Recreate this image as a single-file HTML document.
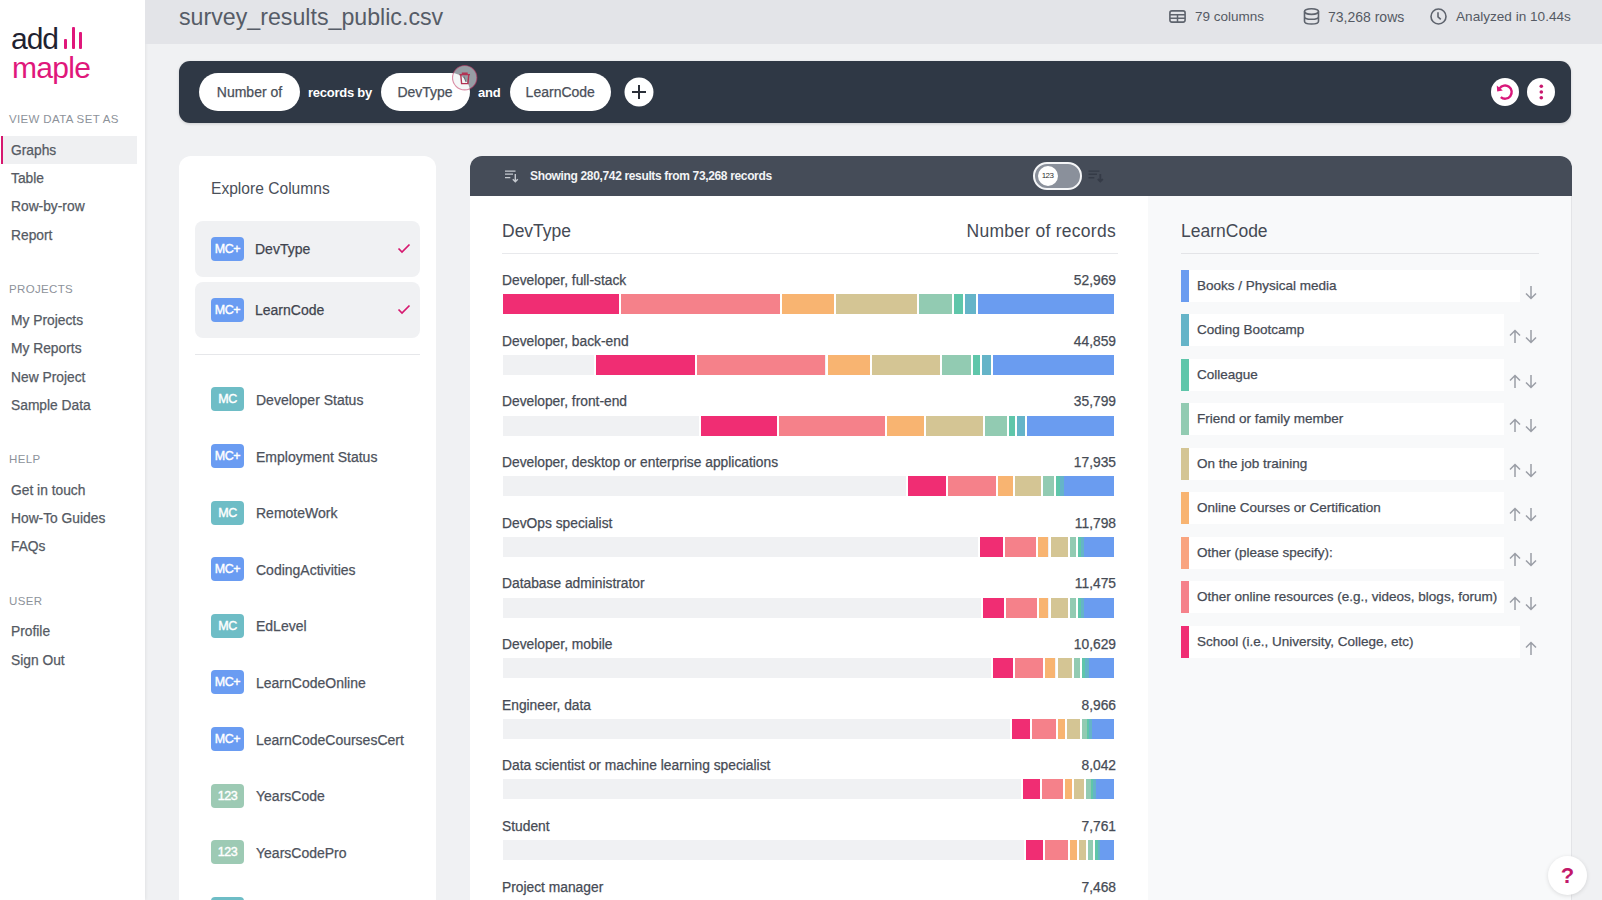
<!DOCTYPE html>
<html><head><meta charset="utf-8">
<style>
*{margin:0;padding:0;box-sizing:border-box}
html,body{width:1602px;height:900px;overflow:hidden;background:#F0F1F3;font-family:"Liberation Sans",sans-serif;color:#4A4F59;position:relative}
.rl,.rv,.lt,.cn,.si,.pill{-webkit-text-stroke:0.25px currentColor}
.abs{position:absolute}
div{white-space:nowrap}
#side{position:absolute;left:0;top:0;width:145px;height:900px;background:#FFFFFF;box-shadow:1px 0 3px rgba(0,0,0,0.06)}
.sh{position:absolute;left:9px;font-size:11.5px;line-height:1;color:#8D929A;letter-spacing:0.35px}
.si{position:absolute;left:11px;font-size:13.8px;line-height:1;color:#555A63}
#hdr{position:absolute;left:145px;top:0;width:1457px;height:44px;background:#E3E4E8}
.t{position:absolute;line-height:1}
.pill{position:absolute;top:73px;height:38px;background:#FFFFFF;border-radius:19px;font-size:14px;line-height:38px;color:#4A4F59;text-align:center}
.qt{position:absolute;top:86px;font-size:13px;line-height:1;color:#FFFFFF;font-weight:bold;letter-spacing:-0.25px}
.badge{position:absolute;left:211px;width:33px;height:24px;border-radius:4px;color:#fff;font-weight:normal;font-size:12.5px;line-height:24px;text-align:center;letter-spacing:-0.4px;-webkit-text-stroke:0.4px #fff}
.cn{position:absolute;left:256px;font-size:14px;line-height:1;color:#4D525C}
.rl{position:absolute;left:502px;font-size:13.8px;line-height:1;color:#464B55}
.rv{position:absolute;right:486px;font-size:13.8px;line-height:1;color:#464B55}
.trk{position:absolute;left:503px;width:611px;height:20px;background:#F0F1F3}
.seg{position:absolute;height:20px;box-sizing:border-box}
.lg{position:absolute;left:1181px;width:8px;height:32px}
.lb{position:absolute;left:1189px;height:32px;background:#FFFFFF}
.lt{position:absolute;left:1197px;font-size:13.5px;line-height:1;color:#464B55}
.ic{position:absolute;line-height:0}
</style></head><body>
<div id="side">
  <div class="abs" style="left:11px;top:23.5px;font-size:30px;color:#1F2230;letter-spacing:-1px;line-height:1">add</div>
  <div class="abs" style="left:64px;top:39px;width:3px;height:10px;background:#E0177B;border-radius:1px"></div>
  <div class="abs" style="left:71.5px;top:27px;width:3px;height:22px;background:#E0177B;border-radius:1px"></div>
  <div class="abs" style="left:78.5px;top:32px;width:3px;height:17px;background:#E0177B;border-radius:1px"></div>
  <div class="abs" style="left:12px;top:53px;font-size:30px;color:#E0177B;letter-spacing:-0.7px;line-height:1">maple</div>
  <div class="abs" style="left:3px;top:135.5px;width:134px;height:28px;background:#EFF0F2"></div>
  <div class="abs" style="left:1px;top:135.5px;width:2px;height:28px;background:#D6186F"></div>
<div class="sh" style="top:114.2px">VIEW DATA SET AS</div>
<div class="si" style="top:143.5px">Graphs</div>
<div class="si" style="top:172.0px">Table</div>
<div class="si" style="top:200.3px">Row-by-row</div>
<div class="si" style="top:228.5px">Report</div>
<div class="sh" style="top:284.2px">PROJECTS</div>
<div class="si" style="top:313.5px">My Projects</div>
<div class="si" style="top:342.0px">My Reports</div>
<div class="si" style="top:370.5px">New Project</div>
<div class="si" style="top:398.5px">Sample Data</div>
<div class="sh" style="top:454.2px">HELP</div>
<div class="si" style="top:483.5px">Get in touch</div>
<div class="si" style="top:511.5px">How-To Guides</div>
<div class="si" style="top:540.0px">FAQs</div>
<div class="sh" style="top:596.2px">USER</div>
<div class="si" style="top:625.0px">Profile</div>
<div class="si" style="top:653.5px">Sign Out</div>
</div>

<div id="hdr">
  <div class="t" style="left:34px;top:6px;font-size:23.2px;color:#565C67">survey_results_public.csv</div>
</div>
<!-- header stats -->
<div class="ic" style="left:1169px;top:10px"><svg width="17" height="13" viewBox="0 0 17 13"><rect x="0.9" y="0.9" width="15.2" height="11.2" rx="2" fill="none" stroke="#5E636D" stroke-width="1.6"/><path d="M1 4.7H16M1 8.3H16M8.5 4.7V12" stroke="#5E636D" stroke-width="1.5"/></svg></div>
<div class="t" style="left:1195px;top:9.5px;font-size:13.5px;color:#555A64">79 columns</div>
<div class="ic" style="left:1303px;top:8px"><svg width="17" height="17" viewBox="0 0 17 17"><ellipse cx="8.5" cy="3.6" rx="7" ry="2.8" fill="none" stroke="#5E636D" stroke-width="1.6"/><path d="M1.5 3.6V13.2C1.5 14.8 4.6 16 8.5 16S15.5 14.8 15.5 13.2V3.6M1.5 8.4C1.5 10 4.6 11.2 8.5 11.2S15.5 10 15.5 8.4" fill="none" stroke="#5E636D" stroke-width="1.6"/></svg></div>
<div class="t" style="left:1328px;top:9.5px;font-size:14px;color:#555A64">73,268 rows</div>
<div class="ic" style="left:1430px;top:8px"><svg width="17" height="17" viewBox="0 0 17 17"><circle cx="8.5" cy="8.5" r="7.5" fill="none" stroke="#5E636D" stroke-width="1.6"/><path d="M8 4.2V8.8L10.8 11.3" fill="none" stroke="#5E636D" stroke-width="1.6"/></svg></div>
<div class="t" style="left:1456px;top:9.5px;font-size:13.6px;color:#555A64">Analyzed in 10.44s</div>

<!-- QUERY BAR -->
<div class="abs" style="left:179px;top:61px;width:1392px;height:62px;background:#2F3845;border-radius:11px;box-shadow:0 1px 3px rgba(0,0,0,0.15)"></div>
<div class="pill" style="left:199px;width:101px">Number of</div>
<div class="qt" style="left:308px">records by</div>
<div class="pill" style="left:380.5px;width:89px">DevType</div>
<div class="ic" style="left:452px;top:65px"><svg width="26" height="26" viewBox="0 0 26 26"><circle cx="12.7" cy="12.7" r="12.2" fill="rgba(235,240,242,0.55)" stroke="rgba(190,50,95,0.55)" stroke-width="1.2"/><path d="M7.5 9.6H18M10.5 9.6V8.3H15V9.6M8.8 10.2L9.6 18.6H15.9L16.7 10.2" fill="none" stroke="#B23353" stroke-width="1.4"/><path d="M11.8 11.5L14.2 17" stroke="#6A6F78" stroke-width="1.1"/></svg></div>
<div class="qt" style="left:478px">and</div>
<div class="pill" style="left:509.5px;width:101.5px">LearnCode</div>
<div class="ic" style="left:623.5px;top:77px"><svg width="30" height="30" viewBox="0 0 30 30"><circle cx="15" cy="15" r="14.5" fill="#FFFFFF"/><path d="M15 8V22M8 15H22" stroke="#2A2F38" stroke-width="2"/></svg></div>
<div class="ic" style="left:1491px;top:78px"><svg width="28" height="28" viewBox="0 0 28 28"><circle cx="14" cy="14" r="14" fill="#FFFFFF"/><path d="M8.6 10.4A6.6 6.6 0 1 1 9.8 19.1" fill="none" stroke="#D9177A" stroke-width="2.4"/><path d="M5.8 7.6L6.2 13.6L11.8 12.4Z" fill="#D9177A"/></svg></div>
<div class="ic" style="left:1527px;top:78px"><svg width="28" height="28" viewBox="0 0 28 28"><circle cx="14" cy="14" r="14" fill="#FFFFFF"/><circle cx="14.3" cy="8.3" r="1.8" fill="#C8176E"/><circle cx="14.3" cy="14" r="1.8" fill="#C8176E"/><circle cx="14.3" cy="19.8" r="1.8" fill="#C8176E"/></svg></div>

<!-- EXPLORE CARD -->
<div class="abs" style="left:179px;top:156px;width:257px;height:760px;background:#FFFFFF;border-radius:12px"></div>
<div class="t" style="left:211px;top:180.5px;font-size:15.6px;color:#4A4F59">Explore Columns</div>
<div class="abs" style="left:195px;top:220.5px;width:225px;height:56.5px;background:#F0F1F3;border-radius:8px"></div>
<div class="abs" style="left:195px;top:281.5px;width:225px;height:56px;background:#F0F1F3;border-radius:8px"></div>
<div class="badge" style="top:236.8px;background:#6A9CF2">MC+</div>
<div class="cn" style="left:255px;top:242px;color:#3F444E">DevType</div>
<div class="badge" style="top:297.5px;background:#6A9CF2">MC+</div>
<div class="cn" style="left:255px;top:302.5px;color:#3F444E">LearnCode</div>
<div class="ic" style="left:397px;top:243px"><svg width="14" height="11" viewBox="0 0 14 11"><path d="M1.5 5.5L5 9L12.5 1.5" fill="none" stroke="#D6186F" stroke-width="1.7"/></svg></div>
<div class="ic" style="left:397px;top:304px"><svg width="14" height="11" viewBox="0 0 14 11"><path d="M1.5 5.5L5 9L12.5 1.5" fill="none" stroke="#D6186F" stroke-width="1.7"/></svg></div>
<div class="abs" style="left:195px;top:354px;width:225px;height:1px;background:#E6E7EA"></div>
<div class="badge" style="top:387.4px;background:#6EBDC6">MC</div>
<div class="cn" style="top:392.9px">Developer Status</div>
<div class="badge" style="top:444.0px;background:#6A9CF2">MC+</div>
<div class="cn" style="top:449.5px">Employment Status</div>
<div class="badge" style="top:500.6px;background:#6EBDC6">MC</div>
<div class="cn" style="top:506.1px">RemoteWork</div>
<div class="badge" style="top:557.2px;background:#6A9CF2">MC+</div>
<div class="cn" style="top:562.7px">CodingActivities</div>
<div class="badge" style="top:613.8px;background:#6EBDC6">MC</div>
<div class="cn" style="top:619.3px">EdLevel</div>
<div class="badge" style="top:670.4px;background:#6A9CF2">MC+</div>
<div class="cn" style="top:675.9px">LearnCodeOnline</div>
<div class="badge" style="top:727.0px;background:#6A9CF2">MC+</div>
<div class="cn" style="top:732.5px">LearnCodeCoursesCert</div>
<div class="badge" style="top:783.6px;background:#9DCAB4">123</div>
<div class="cn" style="top:789.1px">YearsCode</div>
<div class="badge" style="top:840.2px;background:#9DCAB4">123</div>
<div class="cn" style="top:845.7px">YearsCodePro</div>
<div class="badge" style="top:896.8px;background:#6EBDC6">MC</div>

<!-- CHART CARD -->
<div class="abs" style="left:470px;top:156px;width:1102px;height:760px;background:#FFFFFF;border-radius:12px;overflow:hidden">
  <div class="abs" style="left:0;top:0;width:1102px;height:40px;background:#454C58"></div>
  <div class="abs" style="left:678px;top:40px;width:424px;height:720px;background:#F8F9FA;border-right:1px solid #E3E4E7"></div>
</div>
<div class="ic" style="left:504px;top:169px"><svg width="16" height="14" viewBox="0 0 16 14"><path d="M1 2.1H11.5M1 5.2H9M1 8.7H6.3" fill="none" stroke="#C5C9CF" stroke-width="1.3"/><path d="M11.3 5V12.5M8.8 10.2L11.3 12.7L13.8 10.2" fill="none" stroke="#C5C9CF" stroke-width="1.4"/></svg></div>
<div class="t" style="left:530px;top:169.5px;font-size:12px;font-weight:bold;color:#F2F3F5;letter-spacing:-0.35px">Showing 280,742 results from 73,268 records</div>
<div class="abs" style="left:1033px;top:162px;width:49px;height:28px;border-radius:14px;background:#8A909B;border:2.5px solid #F4F5F7"></div>
<div class="abs" style="left:1037.5px;top:166px;width:20px;height:20px;border-radius:10px;background:#FFFFFF;font-size:8px;line-height:20px;text-align:center;color:#333;letter-spacing:-0.6px">123</div>
<div class="ic" style="left:1088px;top:169px"><svg width="17" height="14" viewBox="0 0 17 14"><path d="M0.5 2.1H11.5M0.5 5.2H9M0.5 8.7H6.3" fill="none" stroke="#353B47" stroke-width="1.4"/><path d="M12.3 5V12.3M9.8 10L12.3 12.5L14.8 10" fill="none" stroke="#353B47" stroke-width="1.8"/></svg></div>

<div class="t" style="left:502px;top:222.5px;font-size:17.5px;color:#454A54">DevType</div>
<div class="t" style="right:486px;top:222.5px;font-size:17.5px;color:#454A54;letter-spacing:0.27px">Number of records</div>
<div class="abs" style="left:502px;top:252.5px;width:616px;height:1px;background:#E8E9EC"></div>
<div class="rl" style="top:274.1px">Developer, full-stack</div>
<div class="rv" style="top:274.1px">52,969</div>
<div class="trk" style="top:294.2px"></div>
<div class="seg" style="left:501.0px;top:294.2px;width:118.0px;background:#F02D73;border-left:2px solid #fff"></div>
<div class="seg" style="left:619.0px;top:294.2px;width:161.0px;background:#F5818A;border-left:2px solid #fff"></div>
<div class="seg" style="left:780.0px;top:294.2px;width:53.6px;background:#F8B471;border-left:2px solid #fff"></div>
<div class="seg" style="left:833.6px;top:294.2px;width:83.8px;background:#D4C594;border-left:2px solid #fff"></div>
<div class="seg" style="left:917.4px;top:294.2px;width:34.6px;background:#92CBB2;border-left:2px solid #fff"></div>
<div class="seg" style="left:952.0px;top:294.2px;width:11.0px;background:#5FC6AA;border-left:2px solid #fff"></div>
<div class="seg" style="left:963.0px;top:294.2px;width:13.4px;background:#65B4C8;border-left:2px solid #fff"></div>
<div class="seg" style="left:976.4px;top:294.2px;width:137.6px;background:#6A9CF0;border-left:2px solid #fff"></div>
<div class="rl" style="top:334.8px">Developer, back-end</div>
<div class="rv" style="top:334.8px">44,859</div>
<div class="trk" style="top:354.8px"></div>
<div class="seg" style="left:594.1px;top:354.8px;width:101.0px;background:#F02D73;border-left:2px solid #fff"></div>
<div class="seg" style="left:695.1px;top:354.8px;width:130.4px;background:#F5818A;border-left:2px solid #fff"></div>
<div class="seg" style="left:825.5px;top:354.8px;width:44.4px;background:#F8B471;border-left:2px solid #fff"></div>
<div class="seg" style="left:869.9px;top:354.8px;width:70.4px;background:#D4C594;border-left:2px solid #fff"></div>
<div class="seg" style="left:940.3px;top:354.8px;width:30.7px;background:#92CBB2;border-left:2px solid #fff"></div>
<div class="seg" style="left:971.0px;top:354.8px;width:9.0px;background:#5FC6AA;border-left:2px solid #fff"></div>
<div class="seg" style="left:980.0px;top:354.8px;width:11.2px;background:#65B4C8;border-left:2px solid #fff"></div>
<div class="seg" style="left:991.2px;top:354.8px;width:122.8px;background:#6A9CF0;border-left:2px solid #fff"></div>
<div class="rl" style="top:395.4px">Developer, front-end</div>
<div class="rv" style="top:395.4px">35,799</div>
<div class="trk" style="top:415.5px"></div>
<div class="seg" style="left:699.3px;top:415.5px;width:77.7px;background:#F02D73;border-left:2px solid #fff"></div>
<div class="seg" style="left:777.0px;top:415.5px;width:108.1px;background:#F5818A;border-left:2px solid #fff"></div>
<div class="seg" style="left:885.1px;top:415.5px;width:39.0px;background:#F8B471;border-left:2px solid #fff"></div>
<div class="seg" style="left:924.1px;top:415.5px;width:58.8px;background:#D4C594;border-left:2px solid #fff"></div>
<div class="seg" style="left:982.9px;top:415.5px;width:24.3px;background:#92CBB2;border-left:2px solid #fff"></div>
<div class="seg" style="left:1007.2px;top:415.5px;width:8.0px;background:#5FC6AA;border-left:2px solid #fff"></div>
<div class="seg" style="left:1015.2px;top:415.5px;width:9.8px;background:#65B4C8;border-left:2px solid #fff"></div>
<div class="seg" style="left:1025.0px;top:415.5px;width:89.0px;background:#6A9CF0;border-left:2px solid #fff"></div>
<div class="rl" style="top:456.1px">Developer, desktop or enterprise applications</div>
<div class="rv" style="top:456.1px">17,935</div>
<div class="trk" style="top:476.1px"></div>
<div class="seg" style="left:906.0px;top:476.1px;width:39.8px;background:#F02D73;border-left:2px solid #fff"></div>
<div class="seg" style="left:945.8px;top:476.1px;width:50.2px;background:#F5818A;border-left:2px solid #fff"></div>
<div class="seg" style="left:996.0px;top:476.1px;width:17.1px;background:#F8B471;border-left:2px solid #fff"></div>
<div class="seg" style="left:1013.1px;top:476.1px;width:27.5px;background:#D4C594;border-left:2px solid #fff"></div>
<div class="seg" style="left:1040.6px;top:476.1px;width:13.3px;background:#92CBB2;border-left:2px solid #fff"></div>
<div class="seg" style="left:1053.9px;top:476.1px;width:6.1px;background:#5FC6AA;border-left:2px solid #fff"></div>
<div class="seg" style="left:1060.0px;top:476.1px;width:4.0px;background:#65B4C8;border-left:0px solid #fff"></div>
<div class="seg" style="left:1064.0px;top:476.1px;width:50.0px;background:#6A9CF0;border-left:0px solid #fff"></div>
<div class="rl" style="top:516.7px">DevOps specialist</div>
<div class="rv" style="top:516.7px">11,798</div>
<div class="trk" style="top:536.8px"></div>
<div class="seg" style="left:978.0px;top:536.8px;width:25.2px;background:#F02D73;border-left:2px solid #fff"></div>
<div class="seg" style="left:1003.2px;top:536.8px;width:33.1px;background:#F5818A;border-left:2px solid #fff"></div>
<div class="seg" style="left:1036.3px;top:536.8px;width:12.2px;background:#F8B471;border-left:2px solid #fff"></div>
<div class="seg" style="left:1048.5px;top:536.8px;width:19.5px;background:#D4C594;border-left:2px solid #fff"></div>
<div class="seg" style="left:1068.0px;top:536.8px;width:8.0px;background:#92CBB2;border-left:2px solid #fff"></div>
<div class="seg" style="left:1076.0px;top:536.8px;width:5.0px;background:#5FC6AA;border-left:2px solid #fff"></div>
<div class="seg" style="left:1081.0px;top:536.8px;width:3.0px;background:#65B4C8;border-left:0px solid #fff"></div>
<div class="seg" style="left:1084.0px;top:536.8px;width:30.0px;background:#6A9CF0;border-left:0px solid #fff"></div>
<div class="rl" style="top:577.4px">Database administrator</div>
<div class="rv" style="top:577.4px">11,475</div>
<div class="trk" style="top:597.5px"></div>
<div class="seg" style="left:981.0px;top:597.5px;width:23.2px;background:#F02D73;border-left:2px solid #fff"></div>
<div class="seg" style="left:1004.2px;top:597.5px;width:33.0px;background:#F5818A;border-left:2px solid #fff"></div>
<div class="seg" style="left:1037.2px;top:597.5px;width:11.3px;background:#F8B471;border-left:2px solid #fff"></div>
<div class="seg" style="left:1048.5px;top:597.5px;width:19.5px;background:#D4C594;border-left:2px solid #fff"></div>
<div class="seg" style="left:1068.0px;top:597.5px;width:8.0px;background:#92CBB2;border-left:2px solid #fff"></div>
<div class="seg" style="left:1076.0px;top:597.5px;width:5.0px;background:#5FC6AA;border-left:2px solid #fff"></div>
<div class="seg" style="left:1081.0px;top:597.5px;width:3.0px;background:#65B4C8;border-left:0px solid #fff"></div>
<div class="seg" style="left:1084.0px;top:597.5px;width:30.0px;background:#6A9CF0;border-left:0px solid #fff"></div>
<div class="rl" style="top:638.0px">Developer, mobile</div>
<div class="rv" style="top:638.0px">10,629</div>
<div class="trk" style="top:658.1px"></div>
<div class="seg" style="left:991.0px;top:658.1px;width:22.0px;background:#F02D73;border-left:2px solid #fff"></div>
<div class="seg" style="left:1013.0px;top:658.1px;width:30.2px;background:#F5818A;border-left:2px solid #fff"></div>
<div class="seg" style="left:1043.2px;top:658.1px;width:12.3px;background:#F8B471;border-left:2px solid #fff"></div>
<div class="seg" style="left:1055.5px;top:658.1px;width:16.3px;background:#D4C594;border-left:2px solid #fff"></div>
<div class="seg" style="left:1071.8px;top:658.1px;width:8.2px;background:#92CBB2;border-left:2px solid #fff"></div>
<div class="seg" style="left:1080.0px;top:658.1px;width:5.0px;background:#5FC6AA;border-left:2px solid #fff"></div>
<div class="seg" style="left:1085.0px;top:658.1px;width:3.5px;background:#65B4C8;border-left:0px solid #fff"></div>
<div class="seg" style="left:1088.5px;top:658.1px;width:25.5px;background:#6A9CF0;border-left:0px solid #fff"></div>
<div class="rl" style="top:698.6px">Engineer, data</div>
<div class="rv" style="top:698.6px">8,966</div>
<div class="trk" style="top:718.8px"></div>
<div class="seg" style="left:1010.0px;top:718.8px;width:20.0px;background:#F02D73;border-left:2px solid #fff"></div>
<div class="seg" style="left:1030.0px;top:718.8px;width:25.5px;background:#F5818A;border-left:2px solid #fff"></div>
<div class="seg" style="left:1055.5px;top:718.8px;width:9.3px;background:#F8B471;border-left:2px solid #fff"></div>
<div class="seg" style="left:1064.8px;top:718.8px;width:15.0px;background:#D4C594;border-left:2px solid #fff"></div>
<div class="seg" style="left:1079.8px;top:718.8px;width:7.2px;background:#92CBB2;border-left:2px solid #fff"></div>
<div class="seg" style="left:1087.0px;top:718.8px;width:2.0px;background:#5FC6AA;border-left:0px solid #fff"></div>
<div class="seg" style="left:1089.0px;top:718.8px;width:3.0px;background:#65B4C8;border-left:0px solid #fff"></div>
<div class="seg" style="left:1092.0px;top:718.8px;width:22.0px;background:#6A9CF0;border-left:0px solid #fff"></div>
<div class="rl" style="top:759.3px">Data scientist or machine learning specialist</div>
<div class="rv" style="top:759.3px">8,042</div>
<div class="trk" style="top:779.4px"></div>
<div class="seg" style="left:1021.0px;top:779.4px;width:18.5px;background:#F02D73;border-left:2px solid #fff"></div>
<div class="seg" style="left:1039.5px;top:779.4px;width:23.0px;background:#F5818A;border-left:2px solid #fff"></div>
<div class="seg" style="left:1062.5px;top:779.4px;width:9.3px;background:#F8B471;border-left:2px solid #fff"></div>
<div class="seg" style="left:1071.8px;top:779.4px;width:12.2px;background:#D4C594;border-left:2px solid #fff"></div>
<div class="seg" style="left:1084.0px;top:779.4px;width:7.0px;background:#92CBB2;border-left:2px solid #fff"></div>
<div class="seg" style="left:1091.0px;top:779.4px;width:2.0px;background:#5FC6AA;border-left:0px solid #fff"></div>
<div class="seg" style="left:1093.0px;top:779.4px;width:3.0px;background:#65B4C8;border-left:0px solid #fff"></div>
<div class="seg" style="left:1096.0px;top:779.4px;width:18.0px;background:#6A9CF0;border-left:0px solid #fff"></div>
<div class="rl" style="top:820.0px">Student</div>
<div class="rv" style="top:820.0px">7,761</div>
<div class="trk" style="top:840.1px"></div>
<div class="seg" style="left:1024.0px;top:840.1px;width:18.5px;background:#F02D73;border-left:2px solid #fff"></div>
<div class="seg" style="left:1042.5px;top:840.1px;width:25.3px;background:#F5818A;border-left:2px solid #fff"></div>
<div class="seg" style="left:1067.8px;top:840.1px;width:9.0px;background:#F8B471;border-left:2px solid #fff"></div>
<div class="seg" style="left:1076.8px;top:840.1px;width:9.2px;background:#D4C594;border-left:2px solid #fff"></div>
<div class="seg" style="left:1086.0px;top:840.1px;width:7.0px;background:#92CBB2;border-left:2px solid #fff"></div>
<div class="seg" style="left:1093.0px;top:840.1px;width:4.5px;background:#5FC6AA;border-left:2px solid #fff"></div>
<div class="seg" style="left:1097.5px;top:840.1px;width:2.5px;background:#65B4C8;border-left:0px solid #fff"></div>
<div class="seg" style="left:1100.0px;top:840.1px;width:14.0px;background:#6A9CF0;border-left:0px solid #fff"></div>
<div class="rl" style="top:880.6px">Project manager</div>
<div class="rv" style="top:880.6px">7,468</div>

<div class="t" style="left:1181px;top:222.5px;font-size:17.5px;color:#454A54">LearnCode</div>
<div class="abs" style="left:1181px;top:253px;width:358px;height:1px;background:#E3E4E7"></div>
<div class="lg" style="top:269.5px;background:#6A9CF0"></div>
<div class="lb" style="top:269.5px;width:331px"></div>
<div class="lt" style="top:278.5px">Books / Physical media</div>
<div class="abs" style="left:1525px;top:284.5px;line-height:0"><svg width="12" height="15" viewBox="0 0 12 15"><path d="M6 1V13.5M1 8.5L6 13.5L11 8.5" stroke="#9A9EA6" stroke-width="1.5" fill="none"/></svg></div>
<div class="lg" style="top:314.0px;background:#65B4C8"></div>
<div class="lb" style="top:314.0px;width:315px"></div>
<div class="lt" style="top:323.0px">Coding Bootcamp</div>
<div class="abs" style="left:1509px;top:329.0px;line-height:0"><svg width="12" height="15" viewBox="0 0 12 15"><path d="M6 14V1.5M1 6.5L6 1.5L11 6.5" stroke="#9A9EA6" stroke-width="1.5" fill="none"/></svg></div>
<div class="abs" style="left:1525px;top:329.0px;line-height:0"><svg width="12" height="15" viewBox="0 0 12 15"><path d="M6 1V13.5M1 8.5L6 13.5L11 8.5" stroke="#9A9EA6" stroke-width="1.5" fill="none"/></svg></div>
<div class="lg" style="top:358.5px;background:#5FC6AA"></div>
<div class="lb" style="top:358.5px;width:315px"></div>
<div class="lt" style="top:367.5px">Colleague</div>
<div class="abs" style="left:1509px;top:373.5px;line-height:0"><svg width="12" height="15" viewBox="0 0 12 15"><path d="M6 14V1.5M1 6.5L6 1.5L11 6.5" stroke="#9A9EA6" stroke-width="1.5" fill="none"/></svg></div>
<div class="abs" style="left:1525px;top:373.5px;line-height:0"><svg width="12" height="15" viewBox="0 0 12 15"><path d="M6 1V13.5M1 8.5L6 13.5L11 8.5" stroke="#9A9EA6" stroke-width="1.5" fill="none"/></svg></div>
<div class="lg" style="top:403.0px;background:#92CBB2"></div>
<div class="lb" style="top:403.0px;width:315px"></div>
<div class="lt" style="top:412.0px">Friend or family member</div>
<div class="abs" style="left:1509px;top:418.0px;line-height:0"><svg width="12" height="15" viewBox="0 0 12 15"><path d="M6 14V1.5M1 6.5L6 1.5L11 6.5" stroke="#9A9EA6" stroke-width="1.5" fill="none"/></svg></div>
<div class="abs" style="left:1525px;top:418.0px;line-height:0"><svg width="12" height="15" viewBox="0 0 12 15"><path d="M6 1V13.5M1 8.5L6 13.5L11 8.5" stroke="#9A9EA6" stroke-width="1.5" fill="none"/></svg></div>
<div class="lg" style="top:447.5px;background:#D4C594"></div>
<div class="lb" style="top:447.5px;width:315px"></div>
<div class="lt" style="top:456.5px">On the job training</div>
<div class="abs" style="left:1509px;top:462.5px;line-height:0"><svg width="12" height="15" viewBox="0 0 12 15"><path d="M6 14V1.5M1 6.5L6 1.5L11 6.5" stroke="#9A9EA6" stroke-width="1.5" fill="none"/></svg></div>
<div class="abs" style="left:1525px;top:462.5px;line-height:0"><svg width="12" height="15" viewBox="0 0 12 15"><path d="M6 1V13.5M1 8.5L6 13.5L11 8.5" stroke="#9A9EA6" stroke-width="1.5" fill="none"/></svg></div>
<div class="lg" style="top:492.0px;background:#F8B471"></div>
<div class="lb" style="top:492.0px;width:315px"></div>
<div class="lt" style="top:501.0px">Online Courses or Certification</div>
<div class="abs" style="left:1509px;top:507.0px;line-height:0"><svg width="12" height="15" viewBox="0 0 12 15"><path d="M6 14V1.5M1 6.5L6 1.5L11 6.5" stroke="#9A9EA6" stroke-width="1.5" fill="none"/></svg></div>
<div class="abs" style="left:1525px;top:507.0px;line-height:0"><svg width="12" height="15" viewBox="0 0 12 15"><path d="M6 1V13.5M1 8.5L6 13.5L11 8.5" stroke="#9A9EA6" stroke-width="1.5" fill="none"/></svg></div>
<div class="lg" style="top:536.5px;background:#F9A47F"></div>
<div class="lb" style="top:536.5px;width:315px"></div>
<div class="lt" style="top:545.5px">Other (please specify):</div>
<div class="abs" style="left:1509px;top:551.5px;line-height:0"><svg width="12" height="15" viewBox="0 0 12 15"><path d="M6 14V1.5M1 6.5L6 1.5L11 6.5" stroke="#9A9EA6" stroke-width="1.5" fill="none"/></svg></div>
<div class="abs" style="left:1525px;top:551.5px;line-height:0"><svg width="12" height="15" viewBox="0 0 12 15"><path d="M6 1V13.5M1 8.5L6 13.5L11 8.5" stroke="#9A9EA6" stroke-width="1.5" fill="none"/></svg></div>
<div class="lg" style="top:581.0px;background:#F5818A"></div>
<div class="lb" style="top:581.0px;width:315px"></div>
<div class="lt" style="top:590.0px">Other online resources (e.g., videos, blogs, forum)</div>
<div class="abs" style="left:1509px;top:596.0px;line-height:0"><svg width="12" height="15" viewBox="0 0 12 15"><path d="M6 14V1.5M1 6.5L6 1.5L11 6.5" stroke="#9A9EA6" stroke-width="1.5" fill="none"/></svg></div>
<div class="abs" style="left:1525px;top:596.0px;line-height:0"><svg width="12" height="15" viewBox="0 0 12 15"><path d="M6 1V13.5M1 8.5L6 13.5L11 8.5" stroke="#9A9EA6" stroke-width="1.5" fill="none"/></svg></div>
<div class="lg" style="top:625.5px;background:#F02D73"></div>
<div class="lb" style="top:625.5px;width:331px"></div>
<div class="lt" style="top:634.5px">School (i.e., University, College, etc)</div>
<div class="abs" style="left:1525px;top:640.5px;line-height:0"><svg width="12" height="15" viewBox="0 0 12 15"><path d="M6 14V1.5M1 6.5L6 1.5L11 6.5" stroke="#9A9EA6" stroke-width="1.5" fill="none"/></svg></div>

<div class="abs" style="left:1548px;top:856px;width:39px;height:39px;border-radius:20px;background:#FFFFFF;box-shadow:0 1px 4px rgba(0,0,0,0.12);font-size:22px;font-weight:bold;line-height:39px;text-align:center;color:#C2186A">?</div>
</body></html>
